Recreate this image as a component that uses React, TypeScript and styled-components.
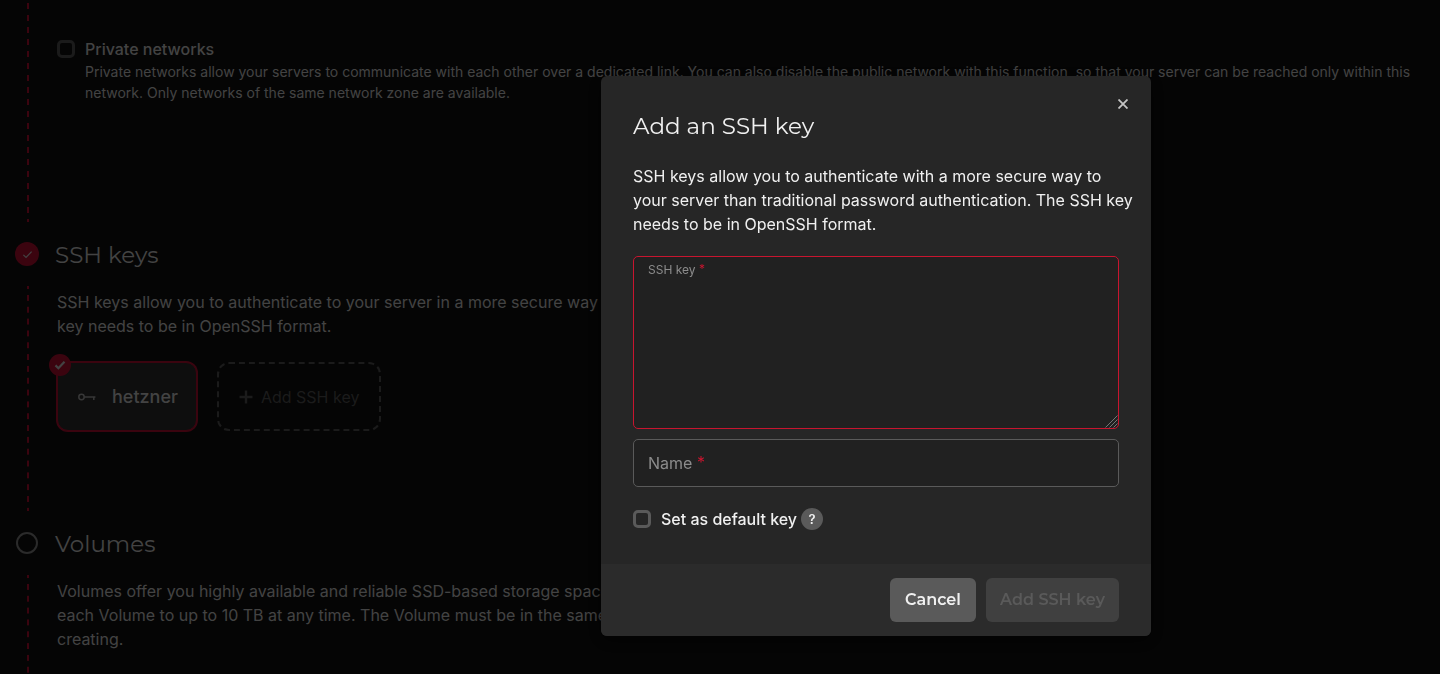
import React, { useState } from "react";
import styled, { createGlobalStyle, css } from "styled-components";

const BODY_FONT = `Inter, "Liberation Sans", sans-serif`;
const TITLE_FONT = `Montserrat, Inter, "Liberation Sans", sans-serif`;
const ACCENT = "#c61034";
const RED = "#c8152f";
const GREY = "#5a5a5a";

const GlobalStyle = createGlobalStyle`
  *, *::before, *::after { box-sizing: border-box; }
  html, body { margin: 0; height: 100%; background: #050505; overflow: hidden; }
  body { font: 400 16px/24px ${BODY_FONT}; color: #dfdfdf; }
  #root { height: 100%; }
  h1, h2, p { margin: 0; }
  button, input, textarea { font: inherit; color: inherit; margin: 0; }
`;

const Page = styled.main`
  height: 100%;
  overflow: hidden;
  background: #111;
`;

const StepHeader = styled.header`
  display: flex;
  align-items: center;
  gap: 16px;
  height: 64px;
  padding-left: 15px;
`;

const Marker = styled.span<{ $done?: boolean }>`
  display: flex;
  align-items: center;
  justify-content: center;
  width: 24px;
  height: 24px;
  border-radius: 50%;
  ${(p) =>
    p.$done
      ? css`
          background: ${ACCENT};
        `
      : css`
          border: 2px solid #8f8f8f;
          width: 22px;
          height: 22px;
          margin: 0 1px;
        `}
`;

const StepTitle = styled.h2`
  padding-top: 2px;
  font: 400 23px/32px ${TITLE_FONT};
`;

const StepBody = styled.div<{ $height: number; $continued?: boolean }>`
  min-height: ${(p) => p.$height}px;
  margin-left: 27px;
  padding: 4px 20px 0 30px;
  background-image: linear-gradient(${ACCENT} 3px, transparent 3px, transparent 9px, ${ACCENT} 9px);
  background-size: 2px 12px;
  background-position: left bottom;
  background-repeat: no-repeat ${(p) => (p.$continued ? "repeat" : "round")};
`;

const StepText = styled.p`
  max-width: 960px;
`;

const Option = styled.div`
  display: grid;
  grid-template-columns: 18px 1fr;
  column-gap: 10px;
  align-items: center;
  padding-top: 33px;
`;

const Check = styled.input`
  appearance: none;
  width: 18px;
  height: 18px;
  border: 3px solid ${GREY};
  border-radius: 5px;
  background: transparent;
  &:checked {
    background: ${RED};
  }
`;

const OptionLabel = styled.label`
  font-weight: 500;
`;

const OptionText = styled.p`
  grid-column: 2;
  font-size: 14px;
  line-height: 21px;
`;

const Cards = styled.div`
  display: flex;
  gap: 20px;
  margin-top: 24px;
`;

const KeyCard = styled.button`
  position: relative;
  display: flex;
  align-items: center;
  gap: 16px;
  height: 69px;
  padding: 0 18px 0 20px;
  border: 1px solid ${ACCENT};
  border-radius: 11px;
  box-shadow: 0 0 0 1px ${ACCENT};
  background: #2f2f2f;
  font-size: 18px;
  font-weight: 500;
`;

const CardBadge = styled.span`
  position: absolute;
  top: -9px;
  left: -9px;
  display: flex;
  align-items: center;
  justify-content: center;
  width: 22px;
  height: 22px;
  border-radius: 50%;
  background: ${ACCENT};
`;

const AddCard = styled.button`
  display: flex;
  align-items: center;
  gap: 8px;
  height: 69px;
  padding: 0 20px;
  border: 2px dashed ${GREY};
  border-radius: 12px;
  background: transparent;
  color: ${GREY};
`;

const Overlay = styled.div`
  position: fixed;
  inset: 0;
  display: flex;
  justify-content: center;
  align-items: flex-start;
  padding: 76px 0 0 312px;
  background: rgba(0, 0, 0, 0.7);
`;

const Dialog = styled.form`
  position: relative;
  width: 100%;
  max-width: 550px;
  border-radius: 6px;
  overflow: hidden;
  background: #262626;
  color: #f0f0f0;
  box-shadow: 0 4px 16px rgba(0, 0, 0, 0.6);
`;

const DialogBody = styled.div`
  padding: 34px 32px 33px;
`;

const DialogTitle = styled.h1`
  margin-bottom: 22px;
  font: 400 23px/32px ${TITLE_FONT};
`;

const DialogText = styled.p`
  margin-right: -20px;
`;

const CloseButton = styled.button`
  position: absolute;
  top: 18px;
  right: 18px;
  display: flex;
  align-items: center;
  justify-content: center;
  width: 20px;
  height: 20px;
  padding: 0;
  border: 0;
  background: none;
  color: #c4c4c4;
`;

const Fields = styled.div`
  display: grid;
  gap: 10px;
  margin: 20px 0;
`;

const Field = styled.div`
  position: relative;
  display: grid;
`;

const FieldLabel = styled.label<{ $small?: boolean }>`
  position: absolute;
  left: 15px;
  top: ${(p) => (p.$small ? 6 : 12)}px;
  color: #8c8c8c;
  font-size: ${(p) => (p.$small ? 12 : 16)}px;
  line-height: ${(p) => (p.$small ? 16 : 24)}px;
  pointer-events: none;
`;

const Required = styled.span`
  color: ${RED};
  line-height: 1;
  vertical-align: 1px;
`;

const inputStyle = css`
  width: 100%;
  border-radius: 5px;
  outline: none;
  background: #212121;
`;

const KeyArea = styled.textarea`
  ${inputStyle}
  height: 173px;
  padding: 24px 14px 8px;
  border: 1px solid ${RED};
  resize: none;
`;

const NameInput = styled.input`
  ${inputStyle}
  height: 48px;
  padding: 0 14px;
  border: 1px solid ${GREY};
`;

const Grip = styled.svg`
  position: absolute;
  right: 1px;
  bottom: 1px;
`;

const DefaultRow = styled.div`
  display: flex;
  align-items: center;
  gap: 10px;
  height: 24px;
`;

const DefaultLabel = styled.label`
  margin-right: -6px;
  font-weight: 500;
`;

const Help = styled.button`
  width: 22px;
  height: 22px;
  padding: 0;
  border: 0;
  border-radius: 50%;
  background: ${GREY};
  font-size: 13px;
  font-weight: 600;
  line-height: 22px;
`;

const DialogFooter = styled.footer`
  display: flex;
  justify-content: flex-end;
  gap: 10px;
  padding: 14px 32px;
  background: #2b2b2b;
`;

const Button = styled.button<{ $width: number }>`
  min-width: ${(p) => p.$width}px;
  height: 44px;
  padding: 0 12px;
  border: 0;
  border-radius: 6px;
  background: ${GREY};
  font: 600 16px/24px ${TITLE_FONT};
  &:disabled {
    background: #404040;
    color: ${GREY};
  }
`;

const Tick = ({ size, weight }: { size: number; weight: number }) => (
  <svg width={size} height={size} viewBox="0 0 12 12" fill="none" stroke="#dfdfdf" strokeWidth={weight} aria-hidden>
    <path d="M1.5 6.4 4.4 9.2 10.5 2.8" />
  </svg>
);

const KeyIcon = () => (
  <svg width="18" height="8" viewBox="0 0 18 8" fill="none" stroke="#b8b8b8" strokeWidth="1.5" aria-hidden>
    <circle cx="3.5" cy="4" r="2.7" />
    <path d="M6.2 4H17.4M15.8 4V7" />
  </svg>
);

const PlusIcon = () => (
  <svg width="14" height="14" viewBox="0 0 14 14" stroke="currentColor" strokeWidth="2.4" aria-hidden>
    <path d="M7 0.5V13.5M0.5 7H13.5" />
  </svg>
);

export default function App() {
  const [sshKey, setSshKey] = useState("");
  const [name, setName] = useState("");

  return (
    <>
      <GlobalStyle />
      <Page>
        <section>
          <StepBody $height={222} $continued>
            <Option>
              <Check type="checkbox" id="private-networks" />
              <OptionLabel htmlFor="private-networks">Private networks</OptionLabel>
              <OptionText>
                Private networks allow your servers to communicate with each other over a dedicated link. You can also
                disable the public network with this function, so that your server can be reached only within this
                <br />
                network. Only networks of the same network zone are available.
              </OptionText>
            </Option>
          </StepBody>
        </section>

        <section>
          <StepHeader>
            <Marker $done>
              <Tick size={11} weight={1.3} />
            </Marker>
            <StepTitle>SSH keys</StepTitle>
          </StepHeader>
          <StepBody $height={225}>
            <StepText>
              SSH keys allow you to authenticate to your server in a more secure way than traditional password
              authentication. The SSH
              <br />
              key needs to be in OpenSSH format.
            </StepText>
            <Cards>
              <KeyCard type="button">
                <CardBadge>
                  <Tick size={12} weight={2.2} />
                </CardBadge>
                <KeyIcon />
                hetzner
              </KeyCard>
              <AddCard type="button">
                <PlusIcon />
                Add SSH key
              </AddCard>
            </Cards>
          </StepBody>
        </section>

        <section>
          <StepHeader>
            <Marker />
            <StepTitle>Volumes</StepTitle>
          </StepHeader>
          <StepBody $height={225}>
            <StepText>
              Volumes offer you highly available and reliable SSD-based storage space for your servers. You can expand
              <br />
              each Volume to up to 10 TB at any time. The Volume must be in the same location as the server you are
              <br />
              creating.
            </StepText>
          </StepBody>
        </section>
      </Page>

      <Overlay>
        <Dialog role="dialog" aria-labelledby="dialog-title" onSubmit={(e) => e.preventDefault()}>
          <CloseButton type="button" aria-label="Close">
            <svg width="10" height="10" viewBox="0 0 10 10" stroke="currentColor" strokeWidth="1.8" aria-hidden>
              <path d="M0.5 0.5 9.5 9.5M9.5 0.5 0.5 9.5" />
            </svg>
          </CloseButton>
          <DialogBody>
            <DialogTitle id="dialog-title">Add an SSH key</DialogTitle>
            <DialogText>
              SSH keys allow you to authenticate with a more secure way to
              <br />
              your server than traditional password authentication. The SSH key
              <br />
              needs to be in OpenSSH format.
            </DialogText>
            <Fields>
              <Field>
                <KeyArea id="ssh-key" value={sshKey} onChange={(e) => setSshKey(e.target.value)} />
                <FieldLabel htmlFor="ssh-key" $small>
                  SSH key <Required>*</Required>
                </FieldLabel>
                <Grip width="13" height="13" viewBox="0 0 13 13" stroke="#8c8c8c" strokeWidth="0.8" aria-hidden>
                  <path d="M0.5 12.5 12.5 0.5M4.5 12.5 12.5 4.5M8.5 12.5 12.5 8.5" />
                </Grip>
              </Field>
              <Field>
                <NameInput id="key-name" type="text" value={name} onChange={(e) => setName(e.target.value)} />
                <FieldLabel htmlFor="key-name">
                  Name <Required>*</Required>
                </FieldLabel>
              </Field>
            </Fields>
            <DefaultRow>
              <Check type="checkbox" id="default-key" />
              <DefaultLabel htmlFor="default-key">Set as default key</DefaultLabel>
              <Help type="button">?</Help>
            </DefaultRow>
          </DialogBody>
          <DialogFooter>
            <Button type="button" $width={86}>
              Cancel
            </Button>
            <Button type="submit" $width={133} disabled>
              Add SSH key
            </Button>
          </DialogFooter>
        </Dialog>
      </Overlay>
    </>
  );
}
